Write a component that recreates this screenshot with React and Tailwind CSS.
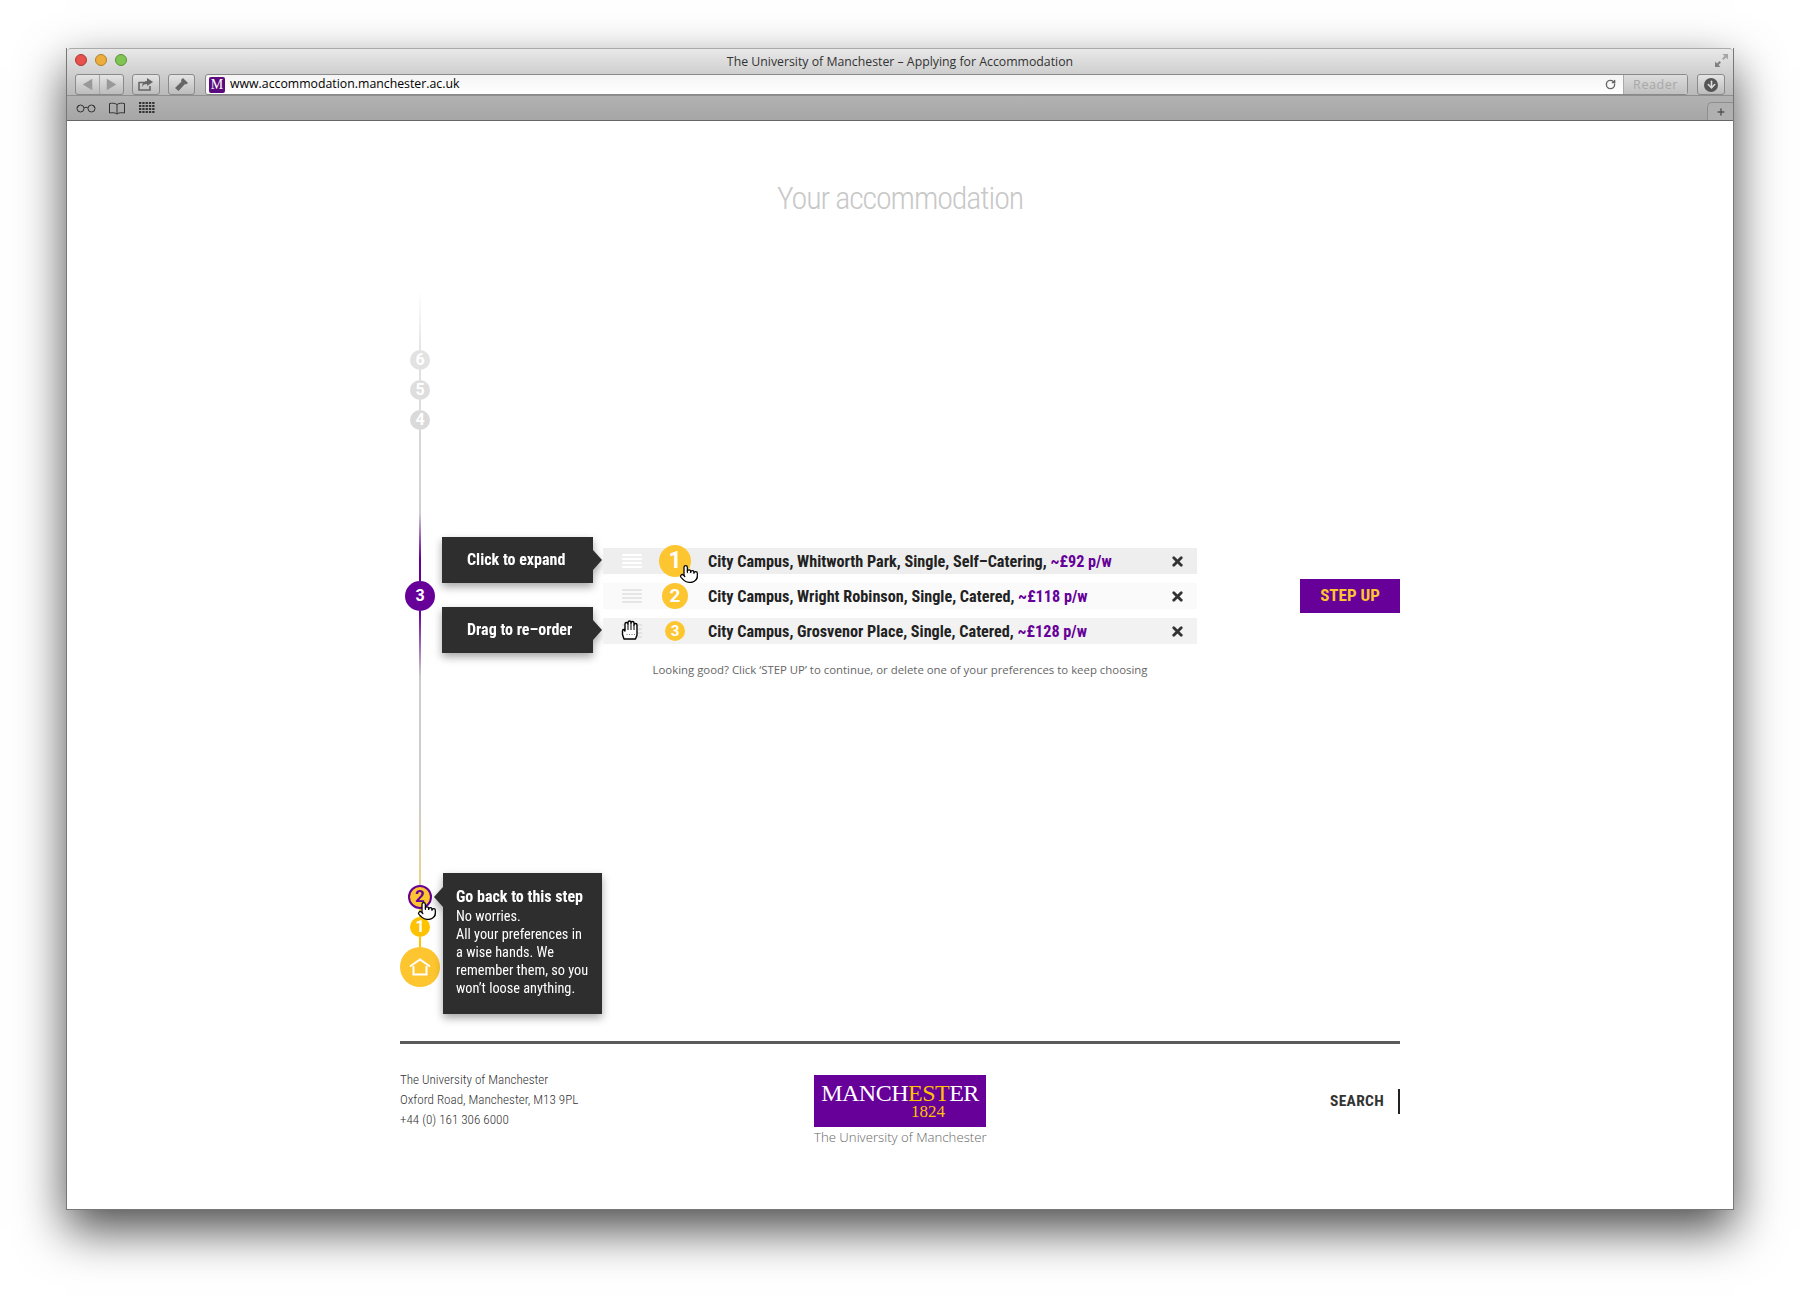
import { Pointer, X, RotateCw, Plus, ArrowDown } from "lucide-react";

const rows = [
  { place: "City Campus, Whitworth Park, Single, Self–Catering,", price: "~£92 p/w", bg: "bg-[#eeeeee]", line: "bg-white", badge: "w-[32px] h-[32px] text-[23px]", n: 1 },
  { place: "City Campus, Wright Robinson, Single, Catered,", price: "~£118 p/w", bg: "bg-[#fafafa]", line: "bg-[#e6e6e6]", badge: "w-[26px] h-[26px] text-[19px]", n: 2 },
  { place: "City Campus, Grosvenor Place, Single, Catered,", price: "~£128 p/w", bg: "bg-[#f2f2f2]", line: "bg-[#e2e2e2]", badge: "w-[20px] h-[20px] text-[15px]", n: 3 },
];

const condensed = "font-['Roboto'] [font-stretch:75%]";

function Cursor({ className }) {
  return <Pointer className={`absolute fill-white text-black ${className}`} size={20} strokeWidth={1.5} />;
}

function GrabHand({ className }) {
  return (
    <svg className={`absolute ${className}`} width="18" height="20" viewBox="0 0 18 20" fill="white" stroke="black" strokeWidth="1.400" strokeLinejoin="round">
      <path d="M3 19L1.500 14.500V11Q1.500 9.500 3 9.500L4 11V4Q4 2.500 5.500 2.500 7 2.500 7 4V2.500Q7 1 8.500 1 10 1 10 2.500V3Q10 1.500 11.500 1.500 13 1.500 13 3V5Q13 3.500 14.500 3.500 16 3.500 16 5V15L14.500 19Z" />
      <path d="M7 4V10M10 3V10M13 5V10" fill="none" strokeWidth="1" />
      <path d="M5.500 14.500h1M8 14.500h1M10.500 14.500h1M13 14.500h1" stroke="#777" strokeWidth="1" />
    </svg>
  );
}

function BrowserChrome() {
  return (
    <div className="rounded-t-[4px] border-b border-[#666] font-['Open_Sans']">
      <div className="h-[47px] bg-gradient-to-b from-[#e9e9e9] to-[#b9b9b9] px-[8px] pt-[5px] relative rounded-t-[4px] border-t border-[#aaa]">
        <div className="flex gap-[8px]">
          <span className="w-[12px] h-[12px] rounded-full bg-[#e8514c] border border-[#a83a36]" />
          <span className="w-[12px] h-[12px] rounded-full bg-[#eeac3c] border border-[#b0812c]" />
          <span className="w-[12px] h-[12px] rounded-full bg-[#80c454] border border-[#5c9338]" />
        </div>
        <div className="absolute top-[4px] left-0 right-0 text-center text-[12.3px] leading-[18px] text-[#333]">
          The University of Manchester – Applying for Accommodation
        </div>
        <svg className="absolute right-[4px] top-[4px]" width="15" height="15" viewBox="0 0 15 15" fill="#808080">
          <path d="M8.5 1H14V6.5L12 4.5 9.5 7 8 5.5 10.5 3Z" fill="#a5a5a5" />
          <path d="M6.5 14H1V8.5L3 10.5 5.5 8 7 9.5 4.5 12Z" />
        </svg>
        <div className="flex items-center mt-[8px] gap-[8px]">
          <div className="w-[49px] h-[21px] rounded-[3px] border border-[#8a8a8a] bg-gradient-to-b from-[#e4e4e4] to-[#bcbcbc] flex">
            <svg className="flex-1 border-r border-[#a5a5a5]" viewBox="0 0 24 20" fill="#999"><path d="M7 10l10-6v12z" /></svg>
            <svg className="flex-1" viewBox="0 0 24 20" fill="#999"><path d="M17 10L7 4v12z" /></svg>
          </div>
          <div className="w-[28px] h-[21px] rounded-[3px] border border-[#8a8a8a] bg-gradient-to-b from-[#e4e4e4] to-[#bcbcbc] flex items-center justify-center">
            <svg width="18" height="15" viewBox="0 0 18 15" fill="none">
              <path d="M2 5.5h5M2 5v8h11V9" stroke="#666" strokeWidth="1.6" />
              <path d="M10 1l6 4-6 4V7c-2 0-4 .6-5 3 0-3.400 2-6 5-6z" fill="#666" />
            </svg>
          </div>
          <div className="w-[27px] h-[21px] rounded-[3px] border border-[#8a8a8a] bg-gradient-to-b from-[#e4e4e4] to-[#bcbcbc] flex items-center justify-center">
            <svg width="15" height="15" viewBox="0 0 15 15" fill="#666">
              <path d="M9 1l5 5-2 1.500-1-.5-6.500 7L1 11l6.500-6.500-.5-1.500z" />
            </svg>
          </div>
          <div className="flex flex-1 h-[21px] ml-[2px] rounded-[3px] border border-[#8a8a8a] bg-gradient-to-b from-[#f4f4f4] to-white">
            <div className="flex items-center flex-1 pl-[3px]">
              <span className="w-[16px] h-[16px] bg-[#5b0a7d] text-white text-[14px] leading-[16px] text-center font-['Liberation_Serif'] rounded-[2px]">M</span>
              <span className="ml-[5px] text-[12.3px] text-black">www.accommodation.manchester.ac.uk</span>
            </div>
            <div className="w-[18px] flex items-center"><RotateCw size={11} strokeWidth={3} className="text-[#666]" /></div>
            <div className="w-[64px] rounded-r-[3px] bg-gradient-to-b from-[#dcdcdc] to-[#c0c0c0] border-l border-[#aaa] text-center text-[12.6px] leading-[19px] text-[#a8a8a8] tracking-[.5px]">Reader</div>
          </div>
          <div className="w-[28px] h-[21px] ml-[1px] rounded-[3px] border border-[#8a8a8a] bg-gradient-to-b from-[#e4e4e4] to-[#bcbcbc] flex items-center justify-center">
            <span className="w-[14px] h-[14px] rounded-full bg-[#555] flex items-center justify-center">
              <ArrowDown size={11} strokeWidth={3.500} className="text-[#ddd]" />
            </span>
          </div>
        </div>
      </div>
      <div className="h-[25px] bg-gradient-to-b from-[#b2b2b2] to-[#a6a6a6] border-t border-[#8f8f8f] flex items-center pl-[9px] relative">
        <svg width="20" height="10" viewBox="0 0 20 10" fill="none" stroke="#333" strokeWidth="1">
          <circle cx="4.500" cy="5.500" r="3.500" /><circle cx="15.500" cy="5.500" r="3.500" /><path d="M8 5c1-1 3-1 4 0M1 5l2-3M19 5l-2-3" />
        </svg>
        <svg className="ml-[12px]" width="18" height="13" viewBox="0 0 18 13" fill="none" stroke="#333" strokeWidth="1">
          <path d="M9 2.500C7 1 4 1 1.500 1.500v9.500c2.500-.5 5.500-.5 7.500 1 2-1.500 5-1.500 7.500-1V1.500C14 1 11 1 9 2.500zM9 2.500V12" />
        </svg>
        <svg className="ml-[13px]" width="16" height="12" viewBox="0 0 16 12" fill="#333">
          {[0, 1, 2, 3].map((r) => [0, 1, 2, 3, 4].map((c) => <rect key={`${r}${c}`} x={c * 3.300} y={r * 3} width="2.300" height="2" />))}
        </svg>
        <div className="absolute right-0 bottom-0 w-[26px] h-[18px] rounded-tl-[5px] bg-[#b0b0b0] border-l border-t border-[#8f8f8f] flex items-center justify-center">
          <Plus size={10} strokeWidth={3.500} className="text-[#555]" />
        </div>
      </div>
    </div>
  );
}

function Stop({ n, className }) {
  return <div className={`rounded-full flex items-center justify-center shrink-0 font-bold text-white font-['Roboto'] ${className}`}>{n}</div>;
}

function Timeline() {
  return (
    <div className="w-[40px] flex flex-col items-center shrink-0 relative">
      <div className="w-[2px] h-[60px] bg-gradient-to-b from-white to-[#e4e4e4]" />
      <Stop n={6} className="w-[20px] h-[20px] bg-[#e2e2e2] text-[16px]" />
      <div className="w-[2px] h-[10px] bg-[#e0e0e0]" />
      <Stop n={5} className="w-[20px] h-[20px] bg-[#dedede] text-[16px]" />
      <div className="w-[2px] h-[10px] bg-[#dcdcdc]" />
      <Stop n={4} className="w-[20px] h-[20px] bg-[#dadada] text-[16px]" />
      <div className="w-[2px] h-[151px] bg-[linear-gradient(to_bottom,#d8d8d8_0%,#d0d0d0_55%,#660099_85%,#660099_100%)]" />
      <Stop n={3} className="w-[30px] h-[30px] bg-[#660099] text-[16px]" />
      <div className="w-[2px] h-[274px] bg-[linear-gradient(to_bottom,#660099_0%,#cccccc_24%,#cccccc_70%,#e8d48c_100%)]" />
      <Stop n={2} className="w-[24px] h-[24px] bg-[#fdc52f] border-2 border-[#660099] !text-[#660099] text-[17px]" />
      <div className="w-[2px] h-[8px] bg-[#fdc300]" />
      <Stop n={1} className="w-[20px] h-[20px] bg-[#fdc300] text-[16px]" />
      <div className="w-[2px] h-[10px] bg-[#fdc300]" />
      <div className="w-[40px] h-[40px] rounded-full bg-[#fdc52f] flex items-center justify-center shrink-0">
        <svg width="22" height="18" viewBox="0 0 22 18" fill="none" stroke="white" strokeWidth="2">
          <path d="M1 8.500L11 1.500l10 7M4.500 8v8.500h13V8" />
        </svg>
      </div>
      <Cursor className="left-[17px] top-[611px]" />
    </div>
  );
}

function Tip({ children }) {
  return (
    <div className="flex items-center drop-shadow-[0_4px_4px_rgba(0,0,0,.35)]">
      <div className={`w-[151px] h-[46px] bg-[#2e2e2e] text-white font-bold text-[16px] pl-[25px] flex items-center ${condensed}`}>{children}</div>
      <div className="w-0 h-0 border-y-[10px] border-y-transparent border-l-[9px] border-l-[#2e2e2e]" />
    </div>
  );
}

export default function App() {
  return (
    <div className="min-h-[1301px] bg-white pt-[48px] px-[66px] overflow-hidden">
      <div className="h-[1162px] w-[1668px] bg-white shadow-[0_20px_45px_rgba(0,0,0,.7)] border-x border-b border-[#777]">
        <BrowserChrome />

        <h1 className={`text-center text-[32px] leading-[40px] tracking-[-1.1px] mt-[57px] font-light text-[#c8c8c8] ${condensed}`}>Your accommodation</h1>

        <div className="w-[1000px] ml-[333px] mt-[72px]">
          <div className="flex">
            <Timeline />
            <div className="flex-1">
              <div className="flex items-start mt-[247px] pl-[2px]">
                <div className="flex flex-col gap-[24px] shrink-0">
                  <Tip>Click to expand</Tip>
                  <Tip>Drag to re–order</Tip>
                </div>
                <div className="w-[594px] ml-[1px] mt-[11px]">
                  <div className="flex flex-col gap-[9px] relative">
                    {rows.map((row) => (
                      <div key={row.n} className={`h-[26px] flex items-center ${row.bg}`}>
                        <div className="w-[20px] ml-[19px] flex flex-col gap-[2px]">
                          {[0, 1, 2, 3].map((i) => <div key={i} className={`h-[2px] ${row.line}`} />)}
                        </div>
                        <div className="w-[66px] flex justify-center">
                          <div className={`rounded-full bg-[#fdc52f] text-white font-bold flex items-center justify-center font-['Roboto'] ${row.badge}`}>{row.n}</div>
                        </div>
                        <div className={`flex-1 pt-[2px] text-[16.2px] font-bold text-[#222] ${condensed}`}>
                          {row.place} <span className="text-[#660099]">{row.price}</span>
                        </div>
                        <X size={15} strokeWidth={4.500} className="text-[#333] mr-[12px]" />
                      </div>
                    ))}
                    <Cursor className="left-[76px] top-[16px]" />
                    <GrabHand className="left-[18px] top-[72px]" />
                  </div>
                  <p className="mt-[19px] text-center text-[11.4px] leading-[14px] text-[#666] font-['Open_Sans']">
                    Looking good? Click ‘STEP UP’ to continue, or delete one of your preferences to keep choosing
                  </p>
                </div>
                <button className={`ml-auto mt-[42px] w-[100px] h-[34px] bg-[#660099] text-[#fdc52f] font-bold text-[17px] ${condensed}`}>STEP UP</button>
              </div>

              <div className="flex items-center mt-[196px] -ml-[6px] drop-shadow-[0_4px_4px_rgba(0,0,0,.35)]">
                <div className="w-0 h-0 border-y-[10px] border-y-transparent border-r-[9px] border-r-[#2e2e2e] self-start mt-[14px]" />
                <div className={`w-[159px] h-[141px] bg-[#2e2e2e] text-white text-[14.3px] leading-[18px] pl-[13px] pt-[14px] ${condensed}`}>
                  <div className="font-bold text-[16px] leading-[20px]">Go back to this step</div>
                  No worries.<br />All your preferences in<br />a wise hands. We<br />remember them, so you<br />won’t loose anything.
                </div>
              </div>
            </div>
          </div>

          <footer className="mt-[27px] border-t-[3px] border-[#5a5a5a] flex">
            <div className={`w-[414px] pt-[26px] text-[13.1px] leading-[20px] font-light text-[#333] ${condensed}`}>
              The University of Manchester<br />Oxford Road, Manchester, M13 9PL<br />+44 (0) 161 306 6000
            </div>
            <div className="w-[172px] pt-[31px] font-['Liberation_Serif']">
              <div className="h-[52px] bg-[#660099] text-white text-center pt-[7px]">
                <div className="text-[24px] leading-[22px] tracking-[-.5px]">MANCH<span className="text-[#fdc300]">EST</span>ER</div>
                <div className="text-[17px] leading-[16px] text-[#fdc300] pl-[56px]">1824</div>
              </div>
              <div className="text-[13.2px] leading-[18px] mt-[1px] text-center text-[#666] font-['Open_Sans'] font-light whitespace-nowrap">The University of Manchester</div>
            </div>
            <div className="flex-1 flex justify-end pt-[45px]">
              <div className={`h-[25px] border-r-2 border-[#222] pr-[14px] text-[15.500px] font-bold leading-[25px] text-[#333] tracking-[.3px] ${condensed}`}>SEARCH</div>
            </div>
          </footer>
        </div>
      </div>
    </div>
  );
}
